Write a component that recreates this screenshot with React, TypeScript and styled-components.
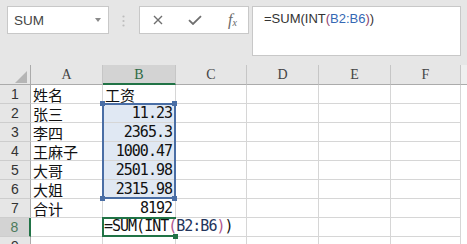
import styled, { createGlobalStyle } from 'styled-components'

const GlobalStyle = createGlobalStyle`
  html, body {
    margin: 0;
    padding: 0;
  }
  body {
    width: 467px;
    height: 244px;
    overflow: hidden;
    background: #e6e6e6;
    font-family: "Liberation Sans", Arial, sans-serif;
  }
`

type Row = { a: string; b: string; numeric?: boolean }

const rows: Row[] = [
  { a: '姓名', b: '工资' },
  { a: '张三', b: '11.23', numeric: true },
  { a: '李四', b: '2365.3', numeric: true },
  { a: '王麻子', b: '1000.47', numeric: true },
  { a: '大哥', b: '2501.98', numeric: true },
  { a: '大姐', b: '2315.98', numeric: true },
  { a: '合计', b: '8192', numeric: true },
  { a: '', b: '' },
  { a: '', b: '' },
]

const columns = ['A', 'B', 'C', 'D', 'E', 'F']

export default function App() {
  return (
    <>
      <GlobalStyle />
      <Toolbar>
        <NameBox>
          <span>SUM</span>
          <svg width="6" height="4" viewBox="0 0 6 4">
            <polygon points="0,0 6,0 3,4" fill="#8a8a8a" />
          </svg>
        </NameBox>

        <Grip width="3" height="12" viewBox="0 0 3 12">
          <circle cx="1.5" cy="1.5" r="1.1" fill="#bdbdbd" />
          <circle cx="1.5" cy="6" r="1.1" fill="#bdbdbd" />
          <circle cx="1.5" cy="10.5" r="1.1" fill="#bdbdbd" />
        </Grip>

        <ButtonsBox>
          <svg width="10" height="10" viewBox="0 0 10 10">
            <path d="M1 1L9 9M9 1L1 9" stroke="#6f6f6f" strokeWidth="1.4" fill="none" />
          </svg>
          <svg width="14" height="10" viewBox="0 0 14 10">
            <path d="M1 5.2L5 9L13 1.2" stroke="#6f6f6f" strokeWidth="1.8" fill="none" />
          </svg>
          <FxLabel>f<sub>x</sub></FxLabel>
        </ButtonsBox>

        <FormulaInput>
          =SUM(INT<BarParen>(</BarParen><BarRef>B2:B6</BarRef><BarParen>)</BarParen>)
        </FormulaInput>
      </Toolbar>

      <Sheet>
        <Corner $r={1} $c={1}>
          <svg width="12" height="12" viewBox="0 0 12 12">
            <polygon points="12,0 12,12 0,12" fill="#b5b5b5" />
          </svg>
        </Corner>
        {columns.map((col, i) => (
          <ColHead key={'col_' + col} $r={1} $c={i + 2} $active={col === 'B'}>{col}</ColHead>
        ))}
        <HeadFiller $r={1} $c={8} />

        {rows.map((row, i) => (
          <RowGroup key={'row_' + i} row={row} index={i} />
        ))}

        <RefRange>
          <Handle $x="left" $y="top" />
          <Handle $x="right" $y="top" />
          <Handle $x="left" $y="bottom" />
          <Handle $x="right" $y="bottom" />
        </RefRange>

        <ActiveCell>
          <NumText>
            =SUM(INT<CellParen>(</CellParen><CellRef>B2:B6</CellRef><CellParen>)</CellParen>)
          </NumText>
          <FillHandle />
        </ActiveCell>
      </Sheet>
    </>
  )
}

function RowGroup({ row, index }: { row: Row; index: number }) {
  const n = index + 1
  const r = n + 1
  const selected = n >= 2 && n <= 6

  return (
    <>
      <RowHead $r={r} $c={1} $active={n === 8}>{n}</RowHead>
      <Cell $r={r} $c={2}>{row.a && <CnText>{row.a}</CnText>}</Cell>
      <Cell $r={r} $c={3} $align={row.numeric ? 'right' : 'left'} $selected={selected} $noRight={n === 8}>
        {row.b && (row.numeric ? <NumText>{row.b}</NumText> : <CnText>{row.b}</CnText>)}
      </Cell>
      <Cell $r={r} $c={4} />
      <Cell $r={r} $c={5} />
      <Cell $r={r} $c={6} />
      <Cell $r={r} $c={7} />
      <Filler $r={r} $c={8} />
    </>
  )
}

type Place = { $r: number; $c: number }

const Toolbar = styled.div`
  box-sizing: border-box;
  height: 56px;
  display: flex;
  align-items: flex-start;
  padding: 6px 0 0 7px;
`

const NameBox = styled.div`
  box-sizing: border-box;
  width: 102px;
  height: 28px;
  display: flex;
  align-items: center;
  justify-content: space-between;
  padding: 0 7px 0 6px;
  background: #fff;
  border: 1px solid #c8c8c8;
  font-size: 13.5px;
  color: #454545;
`

const Grip = styled.svg`
  margin: 9px 14px 0 13px;
`

const ButtonsBox = styled.div`
  box-sizing: border-box;
  width: 110px;
  height: 28px;
  display: flex;
  align-items: center;
  gap: 25px;
  padding-left: 13px;
  background: #fff;
  border: 1px solid #c8c8c8;
`

const FxLabel = styled.span`
  font-family: "Liberation Serif", "Times New Roman", serif;
  font-style: italic;
  font-size: 16px;
  color: #6a6a6a;
  margin-left: 1px;

  sub {
    font-size: 10px;
    vertical-align: -1px;
  }
`

const FormulaInput = styled.div`
  box-sizing: border-box;
  width: 209px;
  height: 50px;
  margin-left: 3px;
  padding: 4px 0 0 11px;
  background: #fff;
  border: 1px solid #c8c8c8;
  font-size: 13px;
  line-height: 16px;
  color: #333;
  white-space: nowrap;
`

const BarRef = styled.span`
  color: #3568b4;
`

const BarParen = styled.span`
  color: #8d3f6e;
`

const Sheet = styled.div`
  margin-top: 9px;
  width: 467px;
  height: 179px;
  overflow: hidden;
  display: grid;
  grid-template-columns: 31px 72px 73px 71px 72px 72px 70px 6px;
  grid-template-rows: 20px repeat(9, 19px);
`

const Corner = styled.div<Place>`
  grid-row: ${p => p.$r};
  grid-column: ${p => p.$c};
  box-sizing: border-box;
  display: flex;
  align-items: flex-end;
  justify-content: flex-end;
  padding: 0 3px 1px 0;
  border-right: 1px solid #ababab;
  border-bottom: 1px solid #ababab;
`

const ColHead = styled.div<Place & { $active?: boolean }>`
  grid-row: ${p => p.$r};
  grid-column: ${p => p.$c};
  box-sizing: border-box;
  display: flex;
  align-items: flex-end;
  justify-content: center;
  padding-bottom: ${p => (p.$active ? '1px' : '2px')};
  background: ${p => (p.$active ? '#d3d3d3' : '#e6e6e6')};
  border-right: 1px solid #c6c6c6;
  border-bottom: ${p => (p.$active ? '2px solid #217346' : '1px solid #ababab')};
  font-family: "Liberation Serif", "Times New Roman", serif;
  font-size: 14px;
  line-height: 15px;
  color: ${p => (p.$active ? '#2d6a45' : '#444')};
`

const HeadFiller = styled.div<Place>`
  grid-row: ${p => p.$r};
  grid-column: ${p => p.$c};
  background: #efefef;
  border-bottom: 1px solid #ababab;
`

const RowHead = styled.div<Place & { $active?: boolean }>`
  grid-row: ${p => p.$r};
  grid-column: ${p => p.$c};
  box-sizing: border-box;
  display: flex;
  align-items: flex-end;
  justify-content: center;
  padding-bottom: 1px;
  background: ${p => (p.$active ? '#d3d3d3' : '#e6e6e6')};
  border-right: ${p => (p.$active ? '2px solid #217346' : '1px solid #ababab')};
  border-bottom: 1px solid #cdcdcd;
  font-size: 14px;
  line-height: 16px;
  color: ${p => (p.$active ? '#4c7a5c' : '#333')};
`

const Cell = styled.div<Place & { $align?: 'left' | 'right'; $selected?: boolean; $noRight?: boolean }>`
  grid-row: ${p => p.$r};
  grid-column: ${p => p.$c};
  box-sizing: border-box;
  display: flex;
  align-items: flex-end;
  justify-content: ${p => (p.$align === 'right' ? 'flex-end' : 'flex-start')};
  padding: 0 3px 0 2px;
  background: ${p => (p.$selected ? '#e0e8f3' : '#fff')};
  border-right: ${p => (p.$noRight ? '1px solid transparent' : '1px solid #d6d6d6')};
  border-bottom: 1px solid #d6d6d6;
  white-space: nowrap;
  overflow: hidden;
`

const Filler = styled.div<Place>`
  grid-row: ${p => p.$r};
  grid-column: ${p => p.$c};
  background: #fff;
`

const CnText = styled.span`
  font-family: "Noto Sans CJK SC", sans-serif;
  font-size: 15px;
  line-height: 17px;
  color: #111;
`

const NumText = styled.span`
  font-family: "DejaVu Sans Mono", "Liberation Mono", monospace;
  font-size: 15px;
  line-height: 17px;
  letter-spacing: -1px;
  color: #111;
`

const CellRef = styled.span`
  color: #23355c;
`

const CellParen = styled.span`
  color: #b0578f;
`

const RefRange = styled.div`
  grid-column: 3;
  grid-row: 3 / 8;
  margin: -1px 0 0 -1px;
  border: 2px solid #4a6ea5;
  position: relative;
  pointer-events: none;
`

const Handle = styled.div<{ $x: 'left' | 'right'; $y: 'top' | 'bottom' }>`
  position: absolute;
  width: 5px;
  height: 5px;
  background: #4a6ea5;
  ${p => (p.$x === 'left' ? 'left: -4px;' : 'right: -3px;')}
  ${p => (p.$y === 'top' ? 'top: -4px;' : 'bottom: -4px;')}
`

const ActiveCell = styled.div`
  grid-column: 3;
  grid-row: 9;
  margin: -1px 0 0 -1px;
  border: 2px solid #217346;
  border-right: none;
  position: relative;
  z-index: 2;
  display: flex;
  align-items: flex-end;
  white-space: nowrap;
`

const FillHandle = styled.div`
  position: absolute;
  right: -2px;
  bottom: -4px;
  width: 5px;
  height: 5px;
  background: #217346;
`
